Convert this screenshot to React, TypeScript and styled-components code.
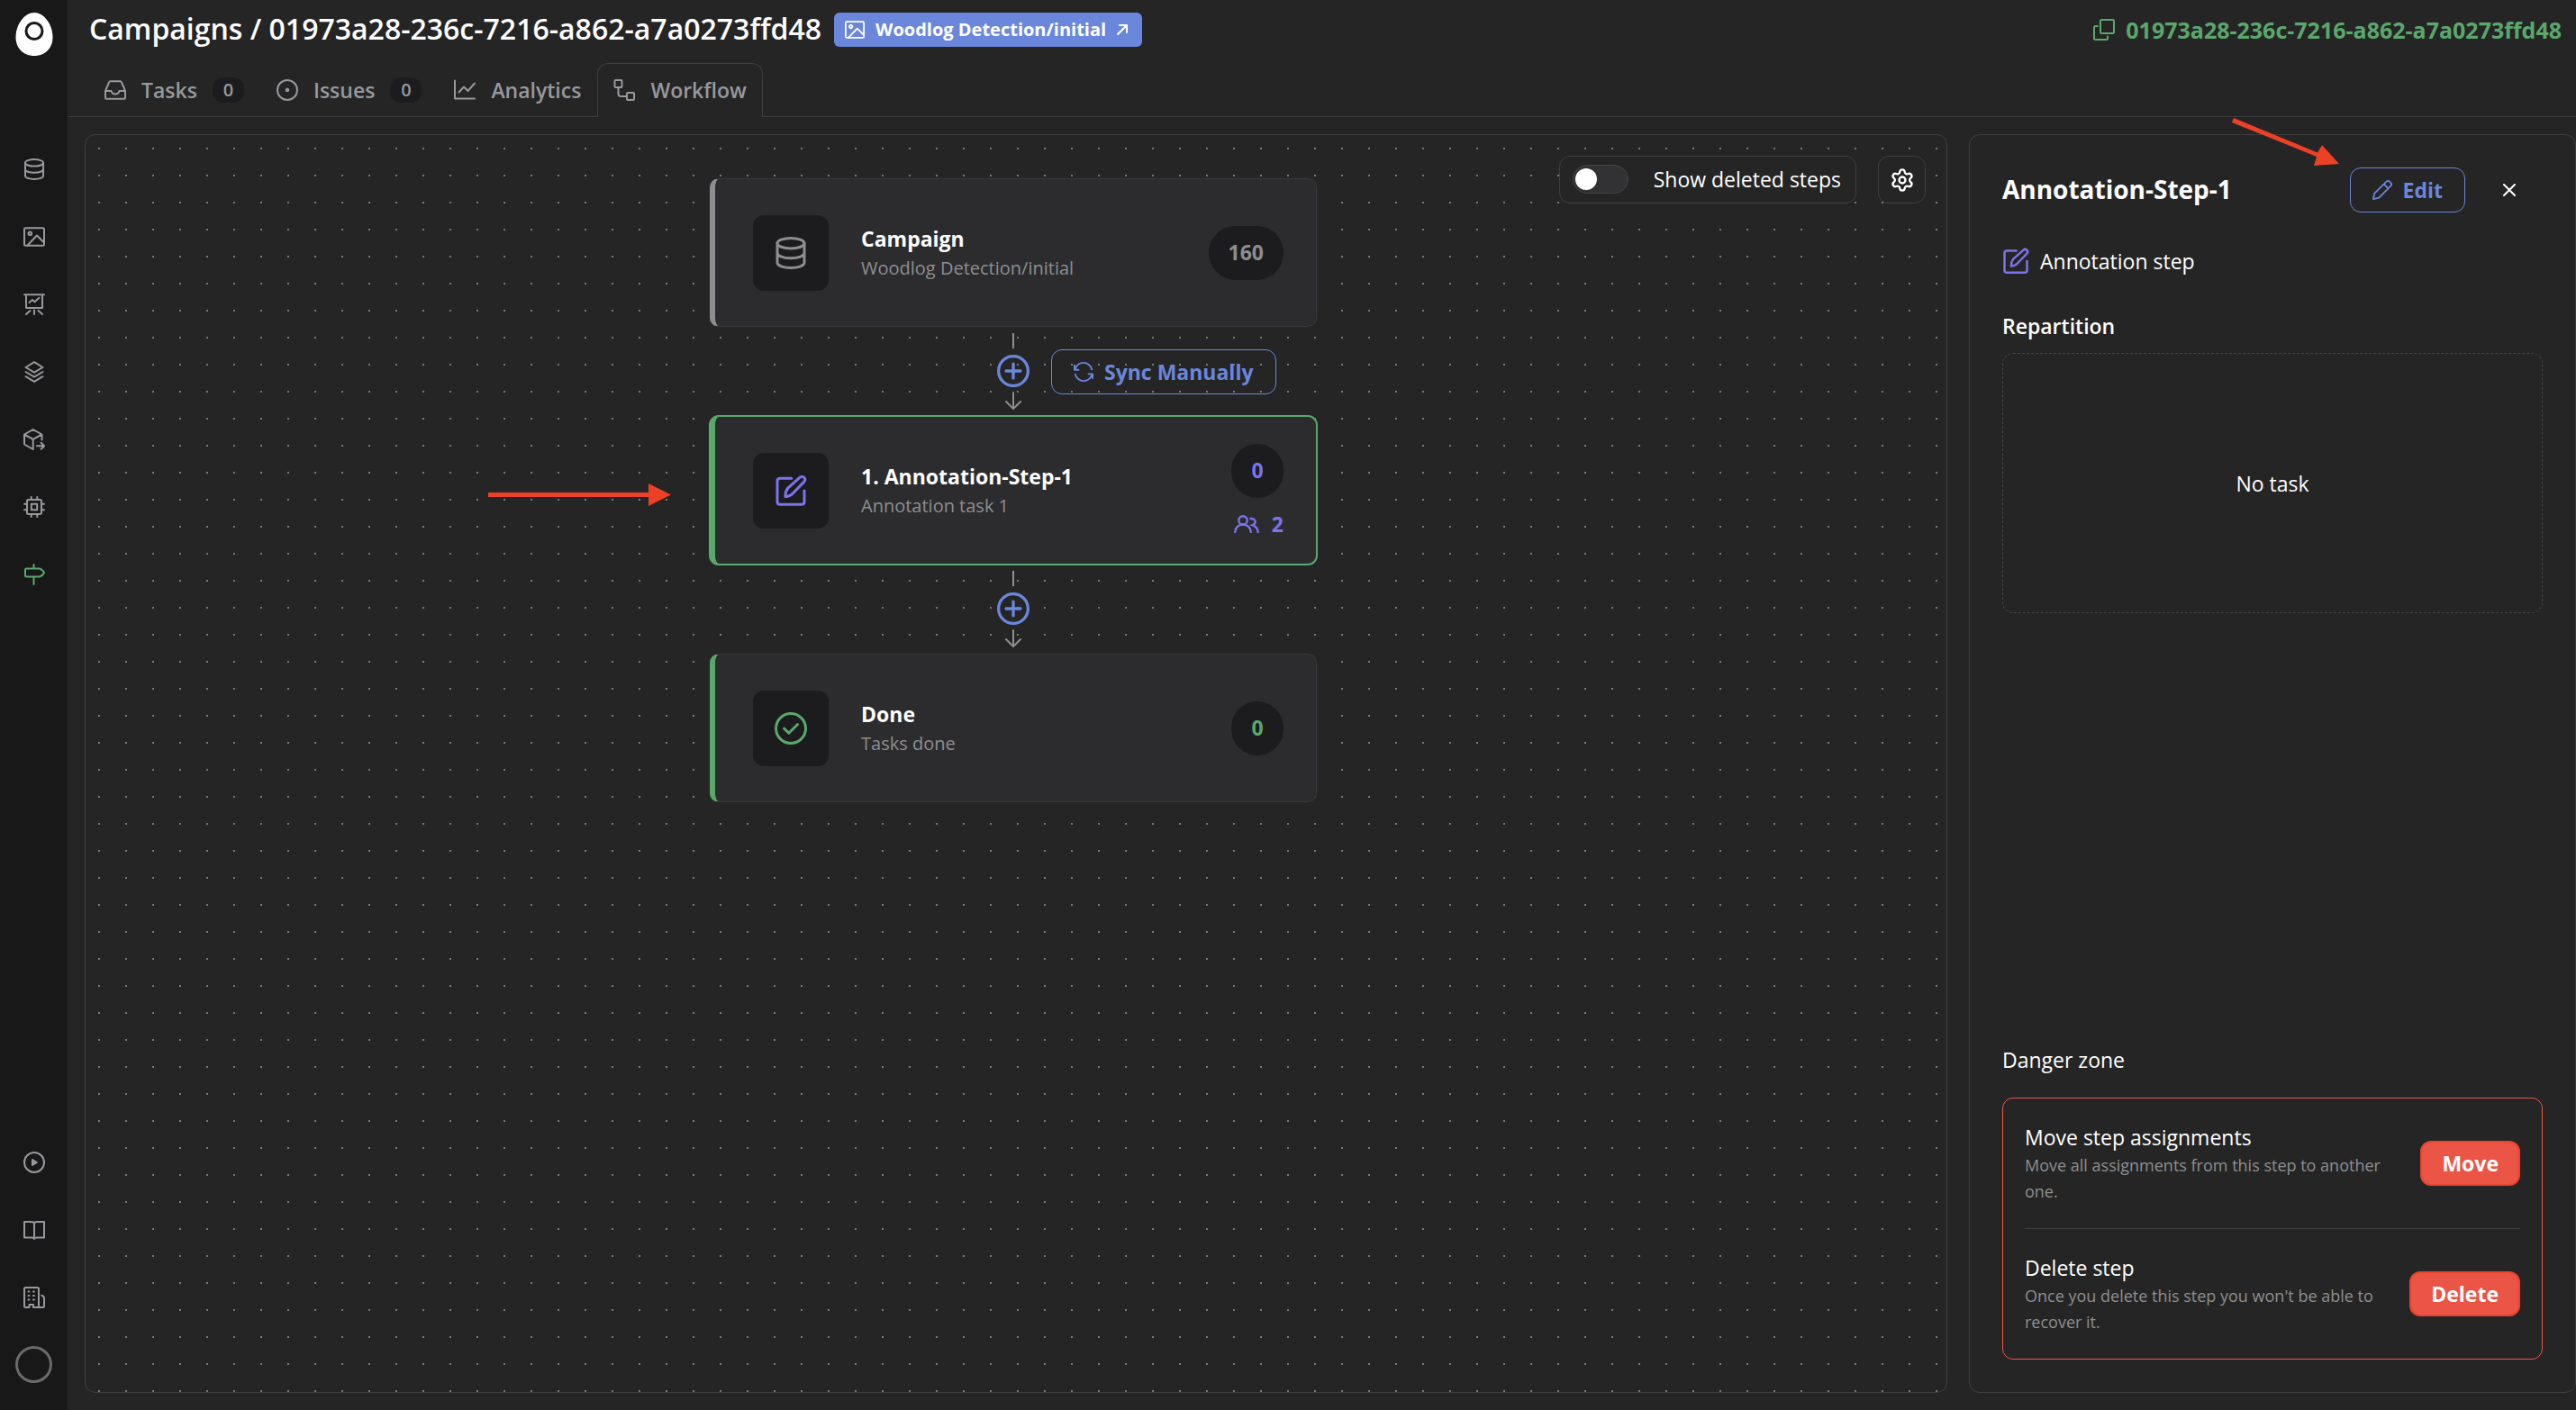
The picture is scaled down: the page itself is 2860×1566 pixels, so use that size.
import React, { useState } from "react";
import styled, { createGlobalStyle, css } from "styled-components";
import { Settings } from "lucide-react";

const c = {
  bg: "#252525",
  rail: "#181818",
  line: "#3f3f41",
  card: "#2c2c2e",
  cardLine: "#39393b",
  well: "#1c1c1e",
  muted: "#8e8e91",
  tab: "#98989d",
  blue: "#6b87dc",
  green: "#5aa86c",
  violet: "#7b74ea",
  red: "#eb5545",
  redLine: "#eb4130",
};

const GlobalStyle = createGlobalStyle`
  *, *::before, *::after { box-sizing: border-box; }
  body {
    margin: 0;
    background: ${c.bg};
    color: #fff;
    font-family: "Open Sans", "Noto Sans", sans-serif;
    font-size: 23px;
    line-height: 32px;
  }
  button { font: inherit; cursor: pointer; }
  a { color: inherit; text-decoration: none; }
  h1, h2, h3, p { margin: 0; font: inherit; }
  svg { display: block; flex: none; }
`;

/* ---------- icons ---------- */

const Stroke = ({
  size = 24,
  width = 2,
  children,
}: {
  size?: number;
  width?: number;
  children: React.ReactNode;
}) => (
  <svg
    width={size}
    height={size}
    viewBox="0 0 24 24"
    fill="none"
    stroke="currentColor"
    strokeWidth={width}
    strokeLinecap="round"
    strokeLinejoin="round"
    aria-hidden="true"
  >
    {children}
  </svg>
);

type IconProps = { size?: number; width?: number };

const DatabaseIcon = (p: IconProps) => (
  <Stroke {...p}>
    <ellipse cx="12" cy="4.8" rx="10" ry="3.8" />
    <path d="M2 4.8v14.4C2 21.4 6.5 23 12 23s10-1.6 10-3.8V4.8M2 12c0 2.2 4.5 3.8 10 3.8s10-1.6 10-3.8" />
  </Stroke>
);
const ImageIcon = (p: IconProps) => (
  <Stroke {...p}>
    <rect x="1" y="2.3" width="22" height="19.4" rx="1.5" />
    <circle cx="7.3" cy="8.3" r="1.8" />
    <path d="M4.5 21.5 15 10.5l8 8" />
  </Stroke>
);
const BoardIcon = (p: IconProps) => (
  <Stroke {...p}>
    <path d="M1 1.2h22M3 1.2V16h18V1.2M6.5 10l3.5-3 2.5 2.2 5-4.4M7.5 19 3 23M12 18.5V23M16.5 19l4.5 4" />
  </Stroke>
);
const LayersIcon = (p: IconProps) => (
  <Stroke {...p}>
    <path d="M12 1.2 21.5 7 12 12.6 2.5 7zM2.5 12l9.5 5.6 9.5-5.6M2.5 17.2 12 22.8l9.5-5.6" />
  </Stroke>
);
const BoxArrowIcon = (p: IconProps) => (
  <Stroke {...p}>
    <path d="M20.5 12.5v-6L10.7 1 1 6.5v11l9.7 5.5V11.8M1 6.5l9.7 5.3 9.8-5.3M15 19.3h8M19.7 15.8l3.4 3.5-3.4 3.5" />
  </Stroke>
);
const ChipIcon = (p: IconProps) => (
  <Stroke {...p}>
    <rect x="4" y="4" width="16" height="16" rx="1.5" />
    <rect x="8.8" y="8.8" width="6.4" height="6.4" />
    <path d="M8.7 1v3M15.3 1v3M8.7 20v3M15.3 20v3M1 8.7h3M1 15.3h3M20 8.7h3M20 15.3h3" />
  </Stroke>
);
const SignpostIcon = (p: IconProps) => (
  <Stroke {...p}>
    <path d="M11.5 1v4.5M11.5 14.5V23M3.5 5.5h14c1 0 4 1.5 5.5 4.5-1.5 3-4.5 4.5-5.5 4.5h-14C2.5 14.5 2 14 2 13V7c0-1 .5-1.5 1.5-1.5z" />
  </Stroke>
);
const PlayIcon = (p: IconProps) => (
  <Stroke {...p}>
    <circle cx="12" cy="12" r="11" />
    <path d="M10 9v6l4.8-3z" fill="currentColor" />
  </Stroke>
);
const BookIcon = (p: IconProps) => (
  <Stroke {...p}>
    <path d="M12 5v17M1 3h8c1.7 0 3 .8 3 2 0-1.2 1.3-2 3-2h8v17.5h-8c-1.5 0-3 .5-3 1.5 0-1-1.5-1.5-3-1.5H1z" />
  </Stroke>
);
const BuildingIcon = (p: IconProps) => (
  <Stroke {...p}>
    <path d="M6.5 23h-4C1.5 23 1 22.5 1 21.5v-19C1 1.5 1.5 1 2.5 1h13c1 0 1.5.5 1.5 1.5V23M6.5 23v-3H11v3h10.5c1 0 1.5-.5 1.5-1.5V13c0-2-1-3-2.8-3.3" />
    <path d="M5.5 5.5h1M5.5 10h1M5.5 14.5h1M11 5.5h1M11 10h1M11 14.5h1" />
  </Stroke>
);
const InboxIcon = (p: IconProps) => (
  <Stroke {...p}>
    <path d="M1 13 5 3.5c.3-.8.8-1.2 1.500-1.200h11c.7 0 1.200.4 1.500 1.200L23 13v7.700c0 .7-.3 1-1 1H2c-.7 0-1-.3-1-1zM1 13h6.500c.5 2 2 3.500 4.500 3.500s4-1.500 4.500-3.500H23" />
  </Stroke>
);
const IssueIcon = (p: IconProps) => (
  <Stroke {...p}>
    <circle cx="12" cy="12" r="11" />
    <circle cx="12" cy="12" r="1.3" fill="currentColor" />
  </Stroke>
);
const ChartIcon = (p: IconProps) => (
  <Stroke {...p}>
    <path d="M1 1.5v20h22M5.5 14.5l5.500-6 4.500 4.500L23 4.500" />
  </Stroke>
);
const FlowIcon = (p: IconProps) => (
  <Stroke {...p}>
    <rect x="1.5" y="1" width="8" height="8" rx="1" />
    <rect x="15" y="15" width="8" height="8" rx="1" />
    <path d="M5.5 9v7c0 2 1 3 3 3H15" />
  </Stroke>
);
const CopyIcon = (p: IconProps) => (
  <Stroke {...p}>
    <rect x="8" y="1" width="15" height="15" rx="1.5" />
    <path d="M5 8H2.5C1.5 8 1 8.5 1 9.5v12c0 1 .5 1.5 1.5 1.5h12c1 0 1.5-.5 1.5-1.5v-2" />
  </Stroke>
);
const ArrowOutIcon = (p: IconProps) => (
  <Stroke {...p}>
    <path d="M2 22 22 2M6 2h16v16" />
  </Stroke>
);
const ComposeIcon = (p: IconProps) => (
  <Stroke {...p}>
    <path d="M12.5 2.8H4c-1.2 0-2 .8-2 2v15.4c0 1.2.8 2 2 2h16c1.2 0 2-.8 2-2V12" />
    <path d="M8 16.5c-.2-2.500.5-5 2-6.600l8.600-7.600c1-.9 2.400-.9 3.200-.1.9.9.9 2.200 0 3.200L13.500 14c-1.500 1.600-3.200 2.400-5.500 2.500z" />
  </Stroke>
);
const CheckIcon = (p: IconProps) => (
  <Stroke {...p}>
    <circle cx="12" cy="12" r="11" />
    <path d="m7 12 3.500 3.500L17 9" />
  </Stroke>
);
const SyncIcon = (p: IconProps) => (
  <Stroke {...p}>
    <path d="M1 4v5.5M1 9.500h5M2 8C4 3.500 7.500 1 12 1s9 3.500 10 8M23 20v-5.500M23 14.500h-5M22 16c-2 4.500-5.500 7-10 7s-9-3.500-10-8" />
  </Stroke>
);
const PencilIcon = (p: IconProps) => (
  <Stroke {...p}>
    <path d="M1 23l1.500-7L17 1.800c1-1 2.700-1 3.700 0l1.500 1.500c1 1 1 2.700 0 3.700L8 21.500zM14 5l5 5" />
  </Stroke>
);
const PlusCircle = () => (
  <Stroke size={36} width={2.2}>
    <circle cx="12" cy="12" r="10.9" />
    <path d="M12 6.7v10.6M6.700 12h10.600" />
  </Stroke>
);
const PeopleIcon = () => (
  <svg width="28" height="20" viewBox="0 0 28 20" fill="none" stroke="currentColor" strokeWidth="2.4" strokeLinecap="round" aria-hidden="true">
    <circle cx="10" cy="5.9" r="4.7" />
    <path d="M1.200 19c.200-5 4-8.500 8.800-8.500s8.600 3.500 8.800 8.500M18.500 4c2.500-.300 5.200 1 5.200 3.600 0 1.700-1.200 2.900-3 3.600 3.300 1.300 5.800 4 6 7.800" />
  </svg>
);

/* ---------- shell ---------- */

const Shell = styled.div`
  display: grid;
  grid-template-columns: 75px minmax(0, 1fr);
  min-height: 100vh;
`;

const Rail = styled.nav`
  display: flex;
  flex-direction: column;
  align-items: center;
  justify-content: space-between;
  padding: 14px 0 30px;
  background: ${c.rail};
`;

const RailGroup = styled.div`
  display: flex;
  flex-direction: column;
  align-items: center;
`;

const Logo = styled.a`
  display: block;
  margin-bottom: 88px;
`;

const RailLink = styled.a<{ $active?: boolean }>`
  display: grid;
  place-items: center;
  width: 75px;
  height: 75px;
  color: ${(p) => (p.$active ? c.green : c.tab)};
`;

const Avatar = styled.button`
  width: 41px;
  height: 41px;
  margin-top: 17px;
  border: 3px solid #6b6b6b;
  border-radius: 50%;
  background: none;
`;

const Main = styled.main`
  display: flex;
  flex-direction: column;
  min-width: 0;
`;

const Header = styled.header`
  display: flex;
  align-items: center;
  justify-content: space-between;
  height: 66px;
  padding: 0 16px 0 24px;
`;

const Crumbs = styled.div`
  display: flex;
  align-items: center;
  gap: 14px;
`;

const PageTitle = styled.h1`
  padding-bottom: 2px;
  font-size: 32px;
  font-weight: 600;
  line-height: 40px;
`;

const DatasetLink = styled.a`
  display: flex;
  align-items: center;
  gap: 12px;
  height: 38px;
  padding: 0 16px 0 12px;
  border-radius: 6px;
  background: ${c.blue};
  font-size: 20px;
  font-weight: 700;
`;

const CopyId = styled.button`
  display: flex;
  align-items: center;
  gap: 12px;
  padding: 0;
  border: 0;
  background: none;
  color: ${c.green};
  font-size: 25px;
  font-weight: 700;
`;

const Tabs = styled.nav`
  display: flex;
  height: 60px;
  margin-top: 4px;
  padding-left: 23px;
  border-bottom: 1px solid ${c.line};
`;

const Tab = styled.a<{ $active?: boolean }>`
  display: flex;
  align-items: center;
  gap: 17px;
  height: 60px;
  padding: 0 17px 2px;
  border: 1px solid transparent;
  border-bottom: 0;
  border-radius: 12px 12px 0 0;
  color: ${c.tab};
  font-weight: 600;
  ${(p) =>
    p.$active &&
    css`
      border-color: ${c.line};
      background: ${c.bg};
    `}
`;

const Count = styled.span`
  display: grid;
  place-items: center;
  width: 35px;
  height: 28px;
  border-radius: 12px;
  background: ${c.well};
  font-size: 20px;
  line-height: 24px;
`;

const Workspace = styled.div`
  display: grid;
  grid-template-columns: minmax(0, 1fr) 674px;
  gap: 24px;
  flex: 1;
  padding: 19px 0 19px 19px;
`;

/* ---------- workflow canvas ---------- */

const Canvas = styled.section`
  position: relative;
  display: flex;
  flex-direction: column;
  align-items: center;
  padding: 48px 6px 48px 0;
  border: 1px solid ${c.line};
  border-radius: 12px;
  background-image: radial-gradient(circle at 15px 15px, #7a7a7a 1px, transparent 1px);
  background-size: 30px 30px;
`;

const Toolbar = styled.div`
  position: absolute;
  top: 23px;
  right: 23px;
  display: flex;
  gap: 24px;
`;

const SwitchLabel = styled.label`
  display: flex;
  align-items: center;
  gap: 28px;
  height: 53px;
  padding: 0 16px 2px 14px;
  border: 1px solid ${c.line};
  border-radius: 12px;
  background: ${c.bg};
`;

const Switch = styled.input`
  appearance: none;
  display: flex;
  align-items: center;
  width: 62px;
  height: 32px;
  margin: 0;
  padding: 0 2px;
  border: 1px solid #444447;
  border-radius: 16px;
  background: #323235;

  &::before {
    content: "";
    width: 24px;
    height: 24px;
    border-radius: 50%;
    background: #fff;
  }
  &:checked { justify-content: flex-end; background: ${c.green}; }
`;

const SquareButton = styled.button`
  display: grid;
  place-items: center;
  width: 53px;
  height: 53px;
  padding: 0;
  border: 1px solid ${c.line};
  border-radius: 12px;
  background: ${c.bg};
  color: #fff;
`;

const StepCard = styled.article<{ $accent: string; $selected?: boolean }>`
  display: flex;
  align-items: center;
  gap: 36px;
  width: 674px;
  height: 165px;
  padding: 0 36px 0 42px;
  border: 1px solid ${(p) => (p.$selected ? p.$accent : c.cardLine)};
  border-left: 6px solid ${(p) => p.$accent};
  border-radius: 10px;
  background: ${c.card};
  ${(p) => p.$selected && css`box-shadow: 0 0 0 1px ${p.$accent};`}
`;

const StepIcon = styled.div<{ $color: string }>`
  display: grid;
  place-items: center;
  flex: none;
  width: 84px;
  height: 84px;
  border-radius: 12px;
  background: ${c.well};
  color: ${(p) => p.$color};
`;

const StepText = styled.div`
  flex: 1;
`;

const StepName = styled.h2`
  line-height: 34px;
  font-weight: 700;
`;

const StepNote = styled.p`
  color: ${c.muted};
  font-size: 20px;
`;

const StepStats = styled.div<{ $color: string }>`
  display: flex;
  flex-direction: column;
  align-items: flex-end;
  gap: 14px;
  color: ${(p) => p.$color};
  font-weight: 700;
`;

const Pill = styled.span`
  display: grid;
  place-items: center;
  min-width: 58px;
  height: 60px;
  padding: 0 22px 2px;
  border-radius: 30px;
  background: ${c.well};
`;

const People = styled.span`
  display: flex;
  align-items: center;
  gap: 14px;
  line-height: 30px;
`;

const Link = styled.div`
  display: grid;
  grid-template-columns: 1fr 36px 1fr;
  align-items: center;
  width: 674px;
  height: 99px;
  color: ${c.muted};
`;

const LinkRun = styled.div`
  grid-column: 2;
  display: flex;
  flex-direction: column;
  align-items: center;
`;

const Stem = styled.span`
  width: 2px;
  height: 17px;
  background: currentColor;
`;

const AddStep = styled.button`
  margin: 7px 0 5px;
  padding: 0;
  border: 0;
  background: none;
  color: ${c.blue};
`;

const OutlineButton = styled.button`
  display: flex;
  align-items: center;
  gap: 12px;
  height: 50px;
  padding: 0 24px;
  border: 1px solid ${c.blue};
  border-radius: 12px;
  background: none;
  color: ${c.blue};
  font-weight: 700;
`;

const SyncSlot = styled.div`
  justify-self: start;
  margin-left: 24px;
`;

const Pointer = styled.svg<{ $left: number; $top: number }>`
  position: absolute;
  left: ${(p) => p.$left}px;
  top: ${(p) => p.$top}px;
  pointer-events: none;
`;

/* ---------- details panel ---------- */

const Panel = styled.aside`
  position: relative;
  display: flex;
  flex-direction: column;
  padding: 36px;
  border: 1px solid ${c.line};
  border-radius: 12px;
`;

const PanelHead = styled.div`
  display: flex;
  align-items: center;
  gap: 24px;
`;

const PanelTitle = styled.h2`
  flex: 1;
  padding-bottom: 2px;
  font-size: 28px;
  font-weight: 700;
  line-height: 40px;
`;

const CloseButton = styled.button`
  display: grid;
  place-items: center;
  width: 50px;
  height: 50px;
  margin-right: 12px;
  padding: 0;
  border: 0;
  background: none;
  color: #fff;
`;

const StepKind = styled.p`
  display: flex;
  align-items: center;
  gap: 12px;
  height: 32px;
  margin: 38px 0 40px;

  svg { color: ${c.violet}; }
`;

const SectionTitle = styled.h3<{ $strong?: boolean }>`
  font-weight: ${(p) => (p.$strong ? 600 : 400)};
`;

const EmptyChart = styled.div`
  display: grid;
  place-items: center;
  height: 289px;
  margin-top: 14px;
  border: 1px dashed #464649;
  border-radius: 12px;
`;

const DangerZone = styled.section`
  margin-top: auto;
`;

const DangerBox = styled.div`
  margin-top: 26px;
  padding: 0 24px;
  border: 1px solid ${c.red};
  border-radius: 12px;
`;

const DangerRow = styled.div`
  display: flex;
  align-items: center;
  justify-content: space-between;
  gap: 24px;
  padding: 26px 0;

  & + & { border-top: 1px solid ${c.line}; }
`;

const DangerName = styled.h4`
  margin: 0;
  font: inherit;
  line-height: 34px;
`;

const DangerNote = styled.p`
  color: ${c.muted};
  font-size: 18px;
  line-height: 29px;
`;

const DangerButton = styled.button`
  flex: none;
  height: 50px;
  padding: 0 22px;
  border: 2px solid ${c.redLine};
  border-radius: 12px;
  background: ${c.red};
  color: #fff;
  font-weight: 700;
`;

/* ---------- data ---------- */

const ID = "01973a28-236c-7216-a862-a7a0273ffd48";

const railTop = [
  { label: "Datasets", Icon: DatabaseIcon },
  { label: "Images", Icon: ImageIcon },
  { label: "Experiments", Icon: BoardIcon },
  { label: "Models", Icon: LayersIcon },
  { label: "Deployments", Icon: BoxArrowIcon },
  { label: "Processing", Icon: ChipIcon },
  { label: "Campaigns", Icon: SignpostIcon, active: true },
];

const railBottom = [
  { label: "Tutorials", Icon: PlayIcon },
  { label: "Documentation", Icon: BookIcon },
  { label: "Organization", Icon: BuildingIcon },
];

const tabs = [
  { label: "Tasks", Icon: InboxIcon, count: 0 },
  { label: "Issues", Icon: IssueIcon, count: 0 },
  { label: "Analytics", Icon: ChartIcon },
  { label: "Workflow", Icon: FlowIcon, active: true },
];

const steps = [
  { name: "Campaign", note: "Woodlog Detection/initial", Icon: DatabaseIcon, accent: c.muted, color: c.muted, total: 160 },
  { name: "1. Annotation-Step-1", note: "Annotation task 1", Icon: ComposeIcon, accent: c.green, color: c.violet, total: 0, people: 2, selected: true },
  { name: "Done", note: "Tasks done", Icon: CheckIcon, accent: c.green, color: c.green, total: 0 },
];

const Connector = ({ sync }: { sync?: boolean }) => (
  <Link>
    <LinkRun>
      <Stem />
      <AddStep type="button" aria-label="Add step">
        <PlusCircle />
      </AddStep>
      <svg width="20" height="20" viewBox="0 0 20 20" fill="none" stroke="currentColor" strokeWidth="2" strokeLinecap="round" strokeLinejoin="round" aria-hidden="true">
        <path d="M10 1v18M2 11l8 8 8-8" />
      </svg>
    </LinkRun>
    {sync && (
      <SyncSlot>
        <OutlineButton type="button">
          <SyncIcon size={22} />
          Sync Manually
        </OutlineButton>
      </SyncSlot>
    )}
  </Link>
);

export default function App() {
  const [showDeleted, setShowDeleted] = useState(false);

  return (
    <>
      <GlobalStyle />
      <Shell>
        <Rail aria-label="Main">
          <RailGroup>
            <Logo href="#" aria-label="Home">
              <svg width="42" height="48" viewBox="0 0 42 48" aria-hidden="true">
                <path d="M21 0c10 0 20.500 12 20.500 27.500C41.500 39.500 33 48 21 48S.5 39.500.5 27.500C.5 12 11 0 21 0z" fill="#fff" />
                <circle cx="21" cy="20.5" r="9" fill="#fff" stroke={c.rail} strokeWidth="3" />
              </svg>
            </Logo>
            {railTop.map(({ label, Icon, active }) => (
              <RailLink key={label} href="#" aria-label={label} $active={active}>
                <Icon />
              </RailLink>
            ))}
          </RailGroup>
          <RailGroup>
            {railBottom.map(({ label, Icon }) => (
              <RailLink key={label} href="#" aria-label={label}>
                <Icon />
              </RailLink>
            ))}
            <Avatar type="button" aria-label="Account" />
          </RailGroup>
        </Rail>

        <Main>
          <Header>
            <Crumbs>
              <PageTitle>Campaigns / {ID}</PageTitle>
              <DatasetLink href="#">
                <ImageIcon size={22} />
                Woodlog Detection/initial
                <ArrowOutIcon size={12} width={4} />
              </DatasetLink>
            </Crumbs>
            <CopyId type="button">
              <CopyIcon />
              {ID}
            </CopyId>
          </Header>

          <Tabs aria-label="Campaign sections">
            {tabs.map(({ label, Icon, count, active }) => (
              <Tab key={label} href="#" $active={active} aria-current={active ? "page" : undefined}>
                <Icon />
                {label}
                {count !== undefined && <Count>{count}</Count>}
              </Tab>
            ))}
          </Tabs>

          <Workspace>
            <Canvas aria-label="Workflow">
              {steps.map(({ name, note, Icon, accent, color, total, people, selected }, i) => (
                <React.Fragment key={name}>
                  {i > 0 && <Connector sync={i === 1} />}
                  <StepCard $accent={accent} $selected={selected}>
                    <StepIcon $color={color}>
                      <Icon size={36} />
                    </StepIcon>
                    <StepText>
                      <StepName>{name}</StepName>
                      <StepNote>{note}</StepNote>
                    </StepText>
                    <StepStats $color={color}>
                      <Pill>{total}</Pill>
                      {people !== undefined && (
                        <People>
                          <PeopleIcon />
                          {people}
                        </People>
                      )}
                    </StepStats>
                  </StepCard>
                </React.Fragment>
              ))}

              <Toolbar>
                <SwitchLabel>
                  <Switch
                    type="checkbox"
                    role="switch"
                    checked={showDeleted}
                    onChange={(e) => setShowDeleted(e.target.checked)}
                  />
                  Show deleted steps
                </SwitchLabel>
                <SquareButton type="button" aria-label="Workflow settings">
                  <Settings size={28} strokeWidth={2} />
                </SquareButton>
              </Toolbar>

              <Pointer $left={447} $top={387} width="204" height="26" viewBox="0 0 204 26" aria-hidden="true">
                <path d="M0 10h178V0l25 12.500L178 25V15H0z" fill="#ea4127" />
              </Pointer>
            </Canvas>

            <Panel aria-label="Step details">
              <PanelHead>
                <PanelTitle>Annotation-Step-1</PanelTitle>
                <OutlineButton type="button">
                  <PencilIcon size={22} />
                  Edit
                </OutlineButton>
                <CloseButton type="button" aria-label="Close">
                  <svg width="14" height="14" viewBox="0 0 14 14" fill="none" stroke="currentColor" strokeWidth="2" strokeLinecap="round" aria-hidden="true">
                    <path d="M1 1l12 12M13 1 1 13" />
                  </svg>
                </CloseButton>
              </PanelHead>

              <StepKind>
                <ComposeIcon size={30} />
                Annotation step
              </StepKind>

              <SectionTitle $strong>Repartition</SectionTitle>
              <EmptyChart>No task</EmptyChart>

              <DangerZone>
                <SectionTitle>Danger zone</SectionTitle>
                <DangerBox>
                  <DangerRow>
                    <div>
                      <DangerName>Move step assignments</DangerName>
                      <DangerNote>Move all assignments from this step to another one.</DangerNote>
                    </div>
                    <DangerButton type="button">Move</DangerButton>
                  </DangerRow>
                  <DangerRow>
                    <div>
                      <DangerName>Delete step</DangerName>
                      <DangerNote>Once you delete this step you won't be able to recover it.</DangerNote>
                    </div>
                    <DangerButton type="button">Delete</DangerButton>
                  </DangerRow>
                </DangerBox>
              </DangerZone>

              <Pointer $left={290} $top={-20} width="121" height="56" viewBox="0 0 121 56" aria-hidden="true">
                <path d="M3 1 96 39.500 101 31 120 52 92 54 95 44 1 6z" fill="#ea4127" />
              </Pointer>
            </Panel>
          </Workspace>
        </Main>
      </Shell>
    </>
  );
}
